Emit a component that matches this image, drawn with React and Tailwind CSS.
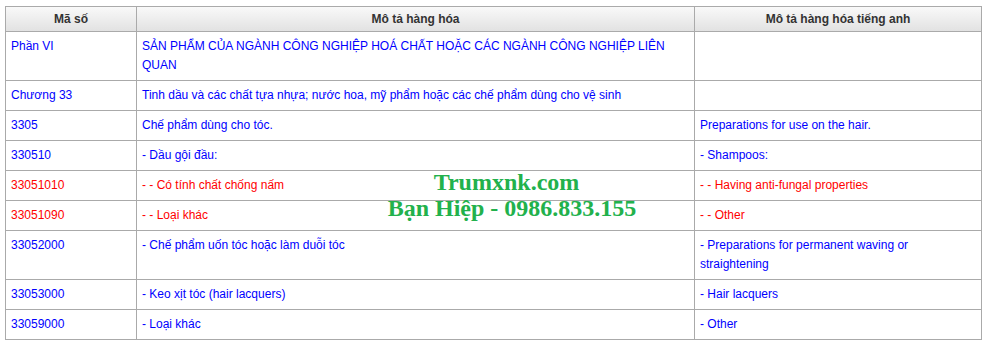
import React from 'react';

const rows = [
  { code: 'Phần VI', vi: 'SẢN PHẨM CỦA NGÀNH CÔNG NGHIỆP HOÁ CHẤT HOẶC CÁC NGÀNH CÔNG NGHIỆP LIÊN QUAN', en: '' },
  { code: 'Chương 33', vi: 'Tinh dầu và các chất tựa nhựa; nước hoa, mỹ phẩm hoặc các chế phẩm dùng cho vệ sinh', en: '' },
  { code: '3305', vi: 'Chế phẩm dùng cho tóc.', en: 'Preparations for use on the hair.' },
  { code: '330510', vi: '- Dầu gội đầu:', en: '- Shampoos:' },
  { code: '33051010', vi: '- - Có tính chất chống nấm', en: '- - Having anti-fungal properties', red: true },
  { code: '33051090', vi: '- - Loại khác', en: '- - Other', red: true },
  { code: '33052000', vi: '- Chế phẩm uốn tóc hoặc làm duỗi tóc', en: '- Preparations for permanent waving or straightening' },
  { code: '33053000', vi: '- Keo xịt tóc (hair lacquers)', en: '- Hair lacquers' },
  { code: '33059000', vi: '- Loại khác', en: '- Other' },
];

const App = () => {
  return (
    <div className="relative min-h-screen bg-white pt-[6px] pl-[5px] font-['Liberation_Sans',Arial,sans-serif] text-[12px]">
      <table className="w-[976px] table-fixed border-collapse">
        <colgroup>
          <col className="w-[131px]" />
          <col className="w-[558px]" />
          <col className="w-[287px]" />
        </colgroup>
        <thead>
          <tr className="bg-linear-to-b from-[#f9f9f9] to-[#e1e1e1]">
            <th className="border border-[#aaaaaa] h-[25px] p-0 text-center font-bold text-[#333333] leading-[19px]">Mã số</th>
            <th className="border border-[#aaaaaa] h-[25px] p-0 text-center font-bold text-[#333333] leading-[19px]">Mô tả hàng hóa</th>
            <th className="border border-[#aaaaaa] h-[25px] p-0 text-center font-bold text-[#333333] leading-[19px]">Mô tả hàng hóa tiếng anh</th>
          </tr>
        </thead>
        <tbody>
          {rows.map((r) => {
            const color = r.red ? 'text-[#ff0000]' : 'text-[#0000ff]';
            return (
              <tr key={r.code}>
                <td className={`border border-[#aaaaaa] px-[5px] py-[5px] align-top leading-[19px] ${color}`}>{r.code}</td>
                <td className={`border border-[#aaaaaa] px-[5px] py-[5px] align-top leading-[19px] ${color}`}>{r.vi}</td>
                <td className={`border border-[#aaaaaa] px-[5px] py-[5px] align-top leading-[19px] ${color}`}>{r.en}</td>
              </tr>
            );
          })}
        </tbody>
      </table>

      {/* watermark */}
      <div className="absolute left-[380px] top-[169px] w-[264px] text-center font-['Liberation_Serif',serif] font-bold text-[24px] leading-[26px] text-[#22b14c]">
        <div className="pr-[11px]">Trumxnk.com</div>
        <div>Bạn Hiệp - 0986.833.155</div>
      </div>
    </div>
  );
};

export default App;
